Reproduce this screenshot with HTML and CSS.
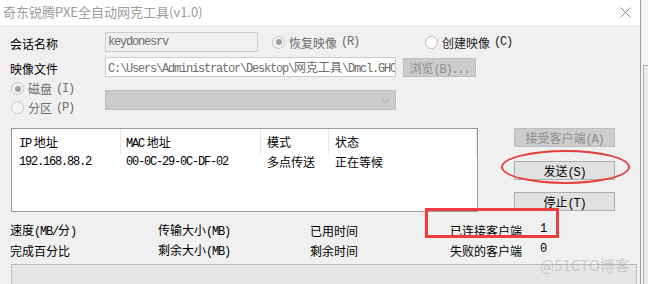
FILE: index.html
```html
<!DOCTYPE html>
<html lang="zh-CN">
<head>
  <meta charset="UTF-8">
  <title>奇东锐腾PXE全自动网克工具</title>
  <link rel="stylesheet" href="styles.css">
</head>
<body>
  <div class="screen">
    <div class="window">
      <div class="titlebar">
        <span class="title">奇东锐腾PXE全自动网克工具(v1.0)</span>
        <svg class="close" width="11" height="11" viewBox="0 0 11 11">
          <path d="M0.5 0.5 L10.5 10.5 M10.5 0.5 L0.5 10.5" stroke="#8a8a8a" stroke-width="1" fill="none"/>
        </svg>
      </div>

      <div class="content">
        <div class="row">
          <span class="label">会话名称</span>
          <div class="field name en">keydonesrv</div>
          <label class="radio dis restore"><span class="dot on"></span>恢复映像<span class="en">(R)</span></label>
          <label class="radio"><span class="dot"></span>创建映像<span class="en">(C)</span></label>
        </div>

        <div class="row row2">
          <span class="label">映像文件</span>
          <div class="field path en">C:\Users\Administrator\Desktop\<span class="cjk">网克工具</span>\Dmcl.GHO</div>
          <button class="btn off browse">浏览<span class="en">(B)...</span></button>
        </div>

        <div class="row3">
          <div class="stack">
            <label class="radio dis"><span class="dot on"></span>磁盘<span class="en">(I)</span></label>
            <label class="radio dis"><span class="dot"></span>分区<span class="en">(P)</span></label>
          </div>
          <div class="combo">
            <svg width="9" height="5" viewBox="0 0 9 5"><path d="M0.5 0.5 L4.5 4.5 L8.5 0.5" stroke="#a8a8a8" fill="none"/></svg>
          </div>
        </div>

        <div class="middle">
          <div class="list">
            <div class="list-head">
              <div class="cell c1"><span class="en">IP</span> 地址</div>
              <div class="cell c2"><span class="en">MAC</span> 地址</div>
              <div class="cell c3">模式</div>
              <div class="cell c4">状态</div>
            </div>
            <div class="list-row">
              <div class="cell c1 en">192.168.88.2</div>
              <div class="cell c2 en">00-0C-29-0C-DF-02</div>
              <div class="cell c3">多点传送</div>
              <div class="cell c4">正在等候</div>
            </div>
          </div>
          <div class="actions">
            <button class="btn off">接受客户端<span class="en">(A)</span></button>
            <button class="btn send">发送<span class="en">(S)</span></button>
            <button class="btn stop">停止<span class="en">(T)</span></button>
          </div>
        </div>

        <div class="stats">
          <span>速度<span class="en">(MB/</span>分<span class="en">)</span></span>
          <span>传输大小<span class="en">(MB)</span></span>
          <span>已用时间</span>
          <span>已连接客户端</span>
          <span class="en num">1</span>
          <span>完成百分比</span>
          <span>剩余大小<span class="en">(MB)</span></span>
          <span>剩余时间</span>
          <span>失败的客户端</span>
          <span class="en num">0</span>
        </div>

        <div class="progress"></div>
      </div>
    </div>
    <div class="side">
      <div class="side-box"></div>
    </div>

    <!-- annotations drawn over the screenshot -->
    <div class="mark-ellipse"></div>
    <div class="mark-box"></div>
    <div class="watermark">@51CTO博客</div>
  </div>
</body>
</html>
```

FILE: styles.css
```css
* {
  box-sizing: border-box;
}

body {
  margin: 0;
  font-family: "Noto Sans CJK SC", "Microsoft YaHei", sans-serif;
  font-size: 12px;
  color: #000;
}

.screen {
  position: relative;
  width: 648px;
  height: 284px;
  overflow: hidden;
  display: flex;
}

.window {
  width: 640px;
  height: 284px;
  background-color: #f0f0f0;
  display: flex;
  flex-direction: column;
  overflow: hidden;
}

.side {
  flex: 1;
  background-color: #f3f3f3;
  border-left: 1px solid #9c9c9c;
  overflow: hidden;
}

.side-box {
  margin-top: 65px;
  height: 219px;
  border-top: 1px solid #b0b0b0;
  border-left: 1px solid #b0b0b0;
  margin-left: 2px;
  background-color: #ececec;
}

.en {
  font-family: "Liberation Mono", monospace;
  font-size: 12px;
  letter-spacing: -1.2px;
}

.cjk {
  font-family: "Noto Sans CJK SC", sans-serif;
  font-size: 12px;
  letter-spacing: 0;
}

/* title bar */
.titlebar {
  flex-shrink: 0;
  height: 25px;
  background-color: #fff;
  display: flex;
  align-items: center;
  justify-content: space-between;
  padding: 0 9px 0 3px;
}

.title {
  font-size: 13px;
  color: #9c9c9c;
  line-height: 1;
  margin-top: -3px;
}

.close {
  margin-top: -1px;
}

/* form */
.content {
  flex-shrink: 0;
  padding: 7px 0 0 10px;
}

.row {
  display: flex;
  align-items: center;
  height: 20px;
}

.row2 {
  margin-top: 5px;
}

.label {
  width: 95px;
  padding-top: 2px;
}

.field {
  height: 20px;
  border: 1px solid #cccccc;
  padding-left: 2px;
  line-height: 18px;
  color: #6d6d6d;
  white-space: nowrap;
  overflow: hidden;
}

.field.name {
  width: 153px;
  background-color: #f0f0f0;
}

.field.path {
  width: 291px;
  background-color: #fff;
}

.radio {
  display: flex;
  align-items: center;
  gap: 4px;
  color: #222;
}

.radio.dis {
  color: #6d6d6d;
}

.restore {
  margin-left: 14px;
  width: 153px;
}

.dot {
  position: relative;
  width: 13px;
  height: 13px;
  border-radius: 50%;
  border: 1px solid #bcbcbc;
  background-color: #fff;
}

.dis .dot {
  background-color: #f4f4f4;
  border-color: #c6c6c6;
}

.dot.on::after {
  content: "";
  position: absolute;
  left: 2.5px;
  top: 2.5px;
  width: 6px;
  height: 6px;
  border-radius: 50%;
  background-color: #a0a0a0;
}

.btn {
  height: 19px;
  padding: 0;
  border: 1px solid #adadad;
  background-color: #e1e1e1;
  font-family: "Noto Sans CJK SC", sans-serif;
  font-size: 12px;
  line-height: 17px;
  color: #000;
}

.btn.off {
  background-color: #cccccc;
  border-color: #bfbfbf;
  color: #8d8d8d;
}

.browse {
  width: 73px;
  margin-left: 7px;
}

.row3 {
  display: flex;
  margin-top: 2px;
}

.stack {
  width: 95px;
  padding-left: 1px;
}

.stack .radio {
  height: 19px;
}

.combo {
  width: 291px;
  height: 20px;
  margin-top: 11px;
  background-color: #cccccc;
  border: 1px solid #bfbfbf;
  display: flex;
  align-items: center;
  justify-content: flex-end;
  padding-right: 5px;
}

/* list and buttons */
.middle {
  display: flex;
  margin-top: 11px;
  padding-left: 1px;
}

.list {
  width: 467px;
  height: 84px;
  background-color: #fff;
  border: 1px solid #9a9a9a;
}

.list-head,
.list-row {
  display: grid;
  grid-template-columns: 109px 140px 68px 148px;
}

.list-head .cell {
  height: 25px;
  line-height: 26px;
  border-right: 1px solid #e5e5e5;
}

.list-row .cell {
  height: 16px;
  line-height: 16px;
}

.cell {
  padding-left: 6px;
  white-space: nowrap;
}

.cell.c1 {
  padding-left: 7px;
}

.cell.c2 {
  padding-left: 5px;
}

.actions {
  margin-left: 36px;
  width: 101px;
  display: flex;
  flex-direction: column;
}

.actions .btn {
  width: 101px;
}

.send {
  margin-top: 14px;
}

.stop {
  margin-top: 12px;
}

/* stats */
.stats {
  display: grid;
  grid-template-columns: 148px 152px 140px 90px auto;
  grid-auto-rows: 20px;
  align-items: center;
  margin-top: 6px;
  padding-top: 2px;
}

.stats .num {
  line-height: 8px;
  margin-top: -3px;
}

.progress {
  margin: 4px 0 0 1px;
  width: 626px;
  height: 24px;
  background-color: #e6e6e6;
  border: 1px solid #bcbcbc;
}

/* annotations */
.mark-ellipse {
  position: absolute;
  left: 501px;
  top: 150px;
  width: 129px;
  height: 34px;
  border: 2px solid #e5403d;
  border-radius: 50%;
}

.mark-box {
  position: absolute;
  left: 425px;
  top: 208px;
  width: 134px;
  height: 30px;
  border: 3px solid #f03c3c;
}

.watermark {
  position: absolute;
  left: 540px;
  top: 254px;
  font-size: 15px;
  color: rgba(150, 150, 150, 0.4);
}
```
